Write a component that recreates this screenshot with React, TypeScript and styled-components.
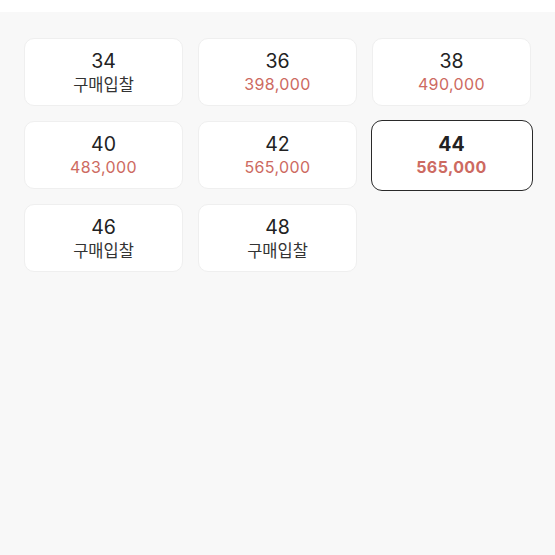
import React from "react";
import styled, { createGlobalStyle } from "styled-components";

const Global = createGlobalStyle`
  html, body { margin: 0; padding: 0; background: #f8f8f8; }
  body { font-family: Inter, "Noto Sans CJK KR", sans-serif; }
`;

const Page = styled.div`
  width: 555px;
  height: 555px;
  background: #f8f8f8;
  display: flex;
  flex-direction: column;
`;

const TopBar = styled.div`
  height: 12px;
  background: #ffffff;
`;

const Grid = styled.div`
  display: grid;
  grid-template-columns: repeat(3, 159px);
  grid-auto-rows: 68px;
  column-gap: 15px;
  row-gap: 15px;
  padding: 26px 0 0 24px;
`;

const Card = styled.button<{ $selected?: boolean }>`
  box-sizing: border-box;
  margin: ${(p) => (p.$selected ? "-1.5px" : "0")};
  padding: 0;
  background: #ffffff;
  border: ${(p) => (p.$selected ? "1.8px solid #2a2a2a" : "1px solid #efefef")};
  border-radius: ${(p) => (p.$selected ? "11px" : "10px")};
  display: flex;
  flex-direction: column;
  align-items: center;
  justify-content: center;
  gap: 1px;
  font-family: Inter, "Noto Sans CJK KR", sans-serif;
  cursor: pointer;
`;

const Size = styled.span<{ $selected?: boolean }>`
  font-size: 19.5px;
  line-height: 23px;
  color: #222222;
  font-weight: ${(p) => (p.$selected ? 700 : 400)};
`;

const Price = styled.span<{ $selected?: boolean }>`
  font-size: 16px;
  line-height: 21px;
  color: #cd6a61;
  letter-spacing: 0.4px;
  font-weight: ${(p) => (p.$selected ? 700 : 400)};
`;

const Bid = styled.span`
  font-size: 16.5px;
  line-height: 21px;
  color: #333333;
  font-family: "Noto Sans CJK KR", sans-serif;
`;

const items: { size: string; price?: string; selected?: boolean }[] = [
  { size: "34" },
  { size: "36", price: "398,000" },
  { size: "38", price: "490,000" },
  { size: "40", price: "483,000" },
  { size: "42", price: "565,000" },
  { size: "44", price: "565,000", selected: true },
  { size: "46" },
  { size: "48" },
];

export default function App() {
  return (
    <Page>
      <Global />
      <TopBar />
      <Grid>
        {items.map((it) => (
          <Card key={it.size} $selected={it.selected}>
            <Size $selected={it.selected}>{it.size}</Size>
            {it.price ? (
              <Price $selected={it.selected}>{it.price}</Price>
            ) : (
              <Bid>구매입찰</Bid>
            )}
          </Card>
        ))}
      </Grid>
    </Page>
  );
}
